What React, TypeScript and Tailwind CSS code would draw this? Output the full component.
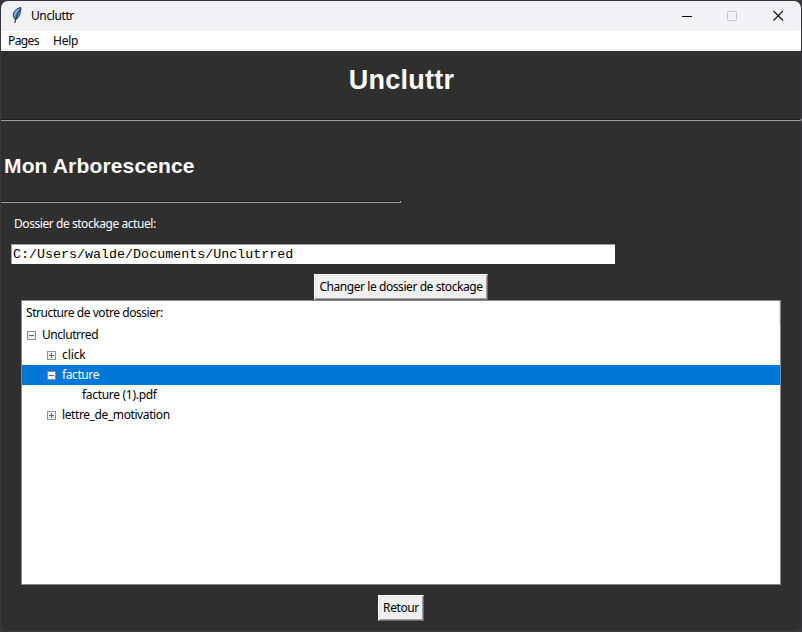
import React from 'react';

const UI = "font-['Noto_Sans','Open_Sans',sans-serif]";

function Expander({ open, selected = false }: { open: boolean; selected?: boolean }) {
  return (
    <svg width="9" height="9" viewBox="0 0 9 9" shapeRendering="crispEdges" className="shrink-0">
      <rect width="9" height="9" fill={selected ? '#8d8a87' : '#919191'} />
      <rect x="1" y="1" width="7" height="7" fill="#fcfcfc" />
      <rect x="1" y="5" width="7" height="3" fill="#ececec" />
      <rect x="2" y="4" width="5" height="1" fill="#4b63a7" />
      {!open && <rect x="4" y="2" width="1" height="5" fill="#4b63a7" />}
    </svg>
  );
}

function Row({ pad, tracking = 'tracking-[-0.4px]', text, state, selected = false }: { pad: string; tracking?: string; text: string; state?: 'open' | 'closed'; selected?: boolean }) {
  return (
    <div className={`flex h-5 items-center gap-[6px] ${pad} ${selected ? 'bg-[#0078d7] text-white' : ''}`}>
      {state && <Expander open={state === 'open'} selected={selected} />}
      <span className={tracking}>{text}</span>
    </div>
  );
}

function Button({ className, children }: { className: string; children: React.ReactNode }) {
  return (
    <button className={`flex h-[26px] items-center justify-center border border-t-white border-l-white border-r-[#696969] border-b-[#696969] bg-[#f0f0f0] text-black ${className}`}>
      <span className="flex h-full w-full items-center justify-center border border-t-[#e3e3e3] border-l-[#e3e3e3] border-r-[#a0a0a0] border-b-[#a0a0a0] whitespace-nowrap">
        {children}
      </span>
    </button>
  );
}

function Separator({ className }: { className: string }) {
  return (
    <div className={`flex h-0.5 shrink-0 border-b border-[#a0a0a0] bg-[#1c1c1c] ${className}`}>
      <span className="ml-auto h-px w-px bg-[#a0a0a0]" />
    </div>
  );
}

export default function App() {
  return (
    <div className={`h-[632px] w-[802px] overflow-hidden bg-[#39373c] p-px text-[12px] leading-[20px] whitespace-nowrap text-black ${UI}`}>
      <div className="flex h-[630px] w-[800px] flex-col overflow-hidden rounded-[7px] bg-[#2f2f2f]">
        <header className="flex h-[30px] shrink-0 items-center bg-[#f1f2f6] pl-[11px]">
          <svg width="10" height="17" viewBox="0 0 10 17" className="-mt-0.5">
            <path d="M3.2 12.5C.6 9.5.7 6.5 3 3.8 4.6 1.9 6.5.8 8.8.6c.2 3.1-.5 6.4-2.1 9.1-1 1.6-2 2.5-3.5 2.8Z" fill="#4f93dc" stroke="#20242b" strokeWidth=".9" />
            <path d="M7.6 3.4C5.8 6 4 9.4 3 16" fill="none" stroke="#10151d" strokeWidth="1" />
            <path d="M6.4 2.4C4.4 4 3 5.8 2.4 8.4" fill="none" stroke="#8dbdf0" strokeWidth="1.2" />
          </svg>
          <span className="ml-[9px] text-[12px] tracking-[-0.4px]">Uncluttr</span>
          <div className="ml-auto flex items-center pr-[17px]">
            <svg width="102" height="12" viewBox="0 0 102 12" fill="none">
              <path d="M0 6.5h10" stroke="#000" />
              <rect x="45.5" y="1.5" width="9" height="9" rx=".6" stroke="#c3c4c8" />
              <path d="m91.5 1 9.5 9.5m0-9.5-9.5 9.5" stroke="#111" strokeWidth="1.1" />
            </svg>
          </div>
        </header>
        <nav className="flex h-5 shrink-0 gap-[14px] border-b-2 border-[#f0f0f0] bg-white pl-[7px]">
          <span className="w-[31px] tracking-[-0.6px]">Pages</span>
          <span className="tracking-[-0.25px]">Help</span>
        </nav>
        <main className="flex flex-col font-normal">
          <h1 className="h-[68px] pt-[13px] pl-px text-center font-['Liberation_Sans',Arial,sans-serif] text-[27px] leading-[32px] font-bold tracking-[0.25px] text-white">Uncluttr</h1>
          <Separator className="w-full" />
          <h2 className="mt-[30px] h-[50px] pt-[3px] pl-[3px] font-['Liberation_Sans',Arial,sans-serif] text-[21px] leading-[24px] font-bold tracking-[0.15px] text-white">Mon Arborescence</h2>
          <Separator className="w-[400px]" />
          <p className="mt-[11px] ml-[13px] h-5 tracking-[-0.44px] text-white">Dossier de stockage actuel:</p>
          <div className="mt-[10px] ml-[10px] h-5 w-[604px] border-t border-l border-[#a0a0a0] bg-white pt-px pl-px font-['Liberation_Mono','Courier_New',monospace] text-[13.35px] leading-[18px]">C:/Users/walde/Documents/Unclutrred</div>
          <Button className="mt-[10px] ml-[313px] w-[174px] tracking-[-0.43px]">Changer le dossier de stockage</Button>
          <section className="ml-5 flex h-[285px] w-[760px] flex-col border border-[#828790] bg-white">
            <div className="h-6 border-r border-[#d9e3ea] pl-1 leading-[24px] tracking-[-0.46px]">Structure de votre dossier:</div>
            <Row pad="pl-[5px]" state="open" text="Unclutrred" tracking="tracking-[-0.45px]" />
            <Row pad="pl-[25px]" state="closed" text="click" tracking="tracking-[-0.1px]" />
            <Row pad="pl-[25px]" state="open" selected text="facture" />
            <Row pad="pl-[60px]" text="facture (1).pdf" tracking="tracking-[-0.3px]" />
            <Row pad="pl-[25px]" state="closed" text="lettre_de_motivation" />
          </section>
          <Button className="mt-[10px] ml-[377px] w-[46px] tracking-[-0.4px]">Retour</Button>
        </main>
      </div>
    </div>
  );
}
